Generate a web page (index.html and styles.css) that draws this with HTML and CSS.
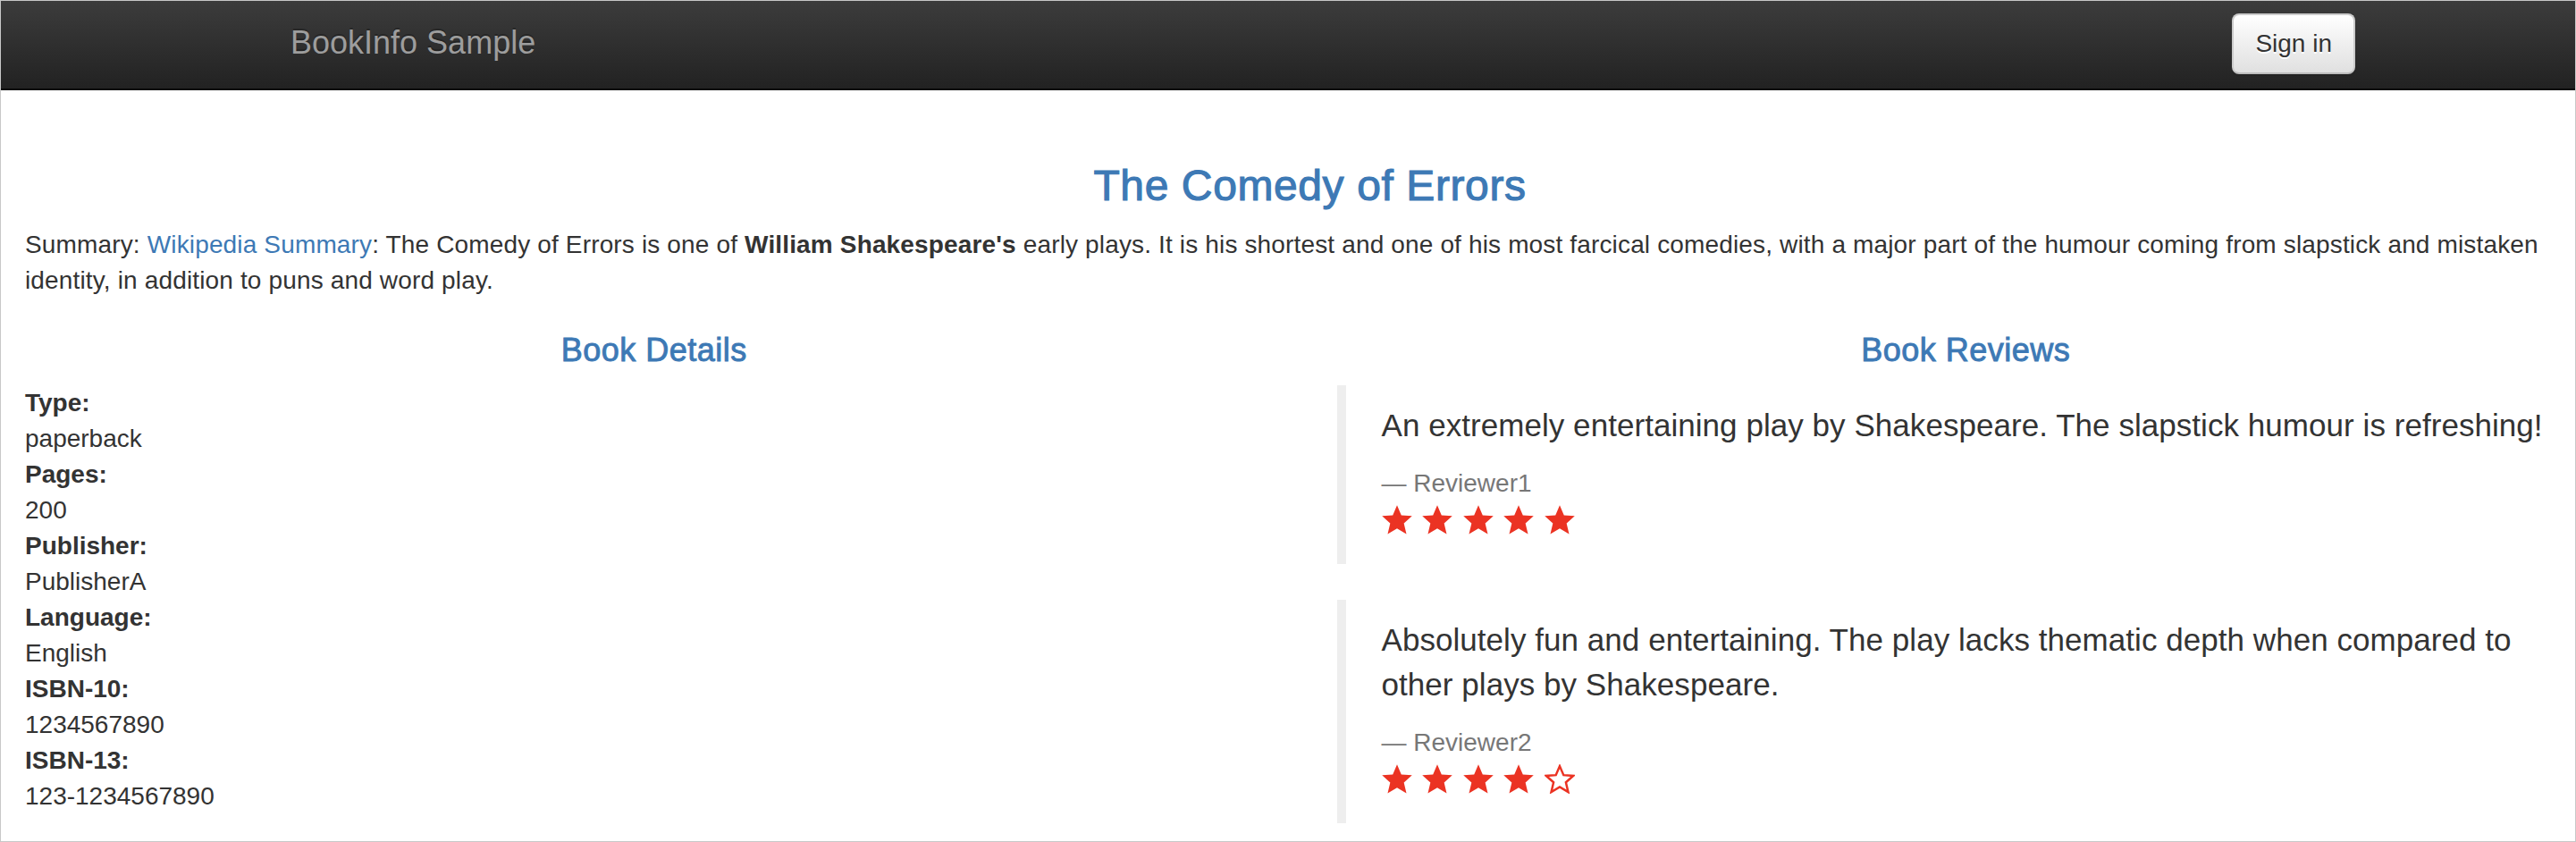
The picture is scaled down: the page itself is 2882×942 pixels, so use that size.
FILE: index.html
```html
<!DOCTYPE html>
<html lang="en">
<head>
<meta charset="utf-8">
<title>Simple Bookstore App</title>
<link rel="stylesheet" href="styles.css">
</head>
<body>
<svg class="defs" width="0" height="0" aria-hidden="true">
  <defs>
    <symbol id="star-full" viewBox="0 0 32 31">
      <polygon points="16,0.3 20.5,10.8 31.8,11.6 23.2,19.3 25.9,30.6 16,24.6 6.1,30.6 8.8,19.3 0.2,11.6 11.5,10.8" fill="currentColor"/>
    </symbol>
    <symbol id="star-empty" viewBox="0 0 32 31">
      <polygon points="16,0.3 20.5,10.8 31.8,11.6 23.2,19.3 25.9,30.6 16,24.6 6.1,30.6 8.8,19.3 0.2,11.6 11.5,10.8" fill="none" stroke="currentColor" stroke-width="2.6" stroke-linejoin="miter" transform="translate(16 17) scale(0.9) translate(-16 -17)"/>
    </symbol>
  </defs>
</svg>
<div class="frame">
  <div class="page">
    <nav class="navbar">
      <div class="nav-container">
        <a class="brand" href="#">BookInfo Sample</a>
        <button class="btn-signin" type="button">Sign in</button>
      </div>
    </nav>
    <main class="main">
      <h3 class="title">The Comedy of Errors</h3>
      <p class="summary">Summary: <a href="#">Wikipedia Summary</a>: The Comedy of Errors is one of <b>William Shakespeare's</b> early plays. It is his shortest and one of his most farcical comedies, with a major part of the humour coming from slapstick and mistaken identity, in addition to puns and word play.</p>
      <div class="row">
        <section class="col">
          <h4 class="section-title">Book Details</h4>
          <dl class="details">
            <dt>Type:</dt><dd>paperback</dd>
            <dt>Pages:</dt><dd>200</dd>
            <dt>Publisher:</dt><dd>PublisherA</dd>
            <dt>Language:</dt><dd>English</dd>
            <dt>ISBN-10:</dt><dd>1234567890</dd>
            <dt>ISBN-13:</dt><dd>123-1234567890</dd>
          </dl>
        </section>
        <section class="col">
          <h4 class="section-title">Book Reviews</h4>
          <blockquote class="review">
            <p>An extremely entertaining play by Shakespeare. The slapstick humour is refreshing!</p>
            <small class="reviewer">Reviewer1</small>
            <div class="stars">
              <svg><use href="#star-full"/></svg>
              <svg><use href="#star-full"/></svg>
              <svg><use href="#star-full"/></svg>
              <svg><use href="#star-full"/></svg>
              <svg><use href="#star-full"/></svg>
            </div>
          </blockquote>
          <blockquote class="review">
            <p>Absolutely fun and entertaining. The play lacks thematic depth when compared to other plays by Shakespeare.</p>
            <small class="reviewer">Reviewer2</small>
            <div class="stars">
              <svg><use href="#star-full"/></svg>
              <svg><use href="#star-full"/></svg>
              <svg><use href="#star-full"/></svg>
              <svg><use href="#star-full"/></svg>
              <svg><use href="#star-empty"/></svg>
            </div>
          </blockquote>
        </section>
      </div>
    </main>
  </div>
</div>
</body>
</html>
```
FILE: styles.css
```css
html, body {
  margin: 0;
  padding: 0;
  background: #fff;
}

body {
  overflow: hidden;
  font-family: "Liberation Sans", Arial, Helvetica, sans-serif;
  font-size: 28px;
  line-height: 40px;
  color: #333;
}

.defs {
  position: absolute;
  width: 0;
  height: 0;
  overflow: hidden;
}

.frame {
  width: 2882px;
  height: 942px;
  box-sizing: border-box;
  border: 1px solid #c8c8c8;
  overflow: hidden;
  background: #fff;
}

.page {
  width: 2932px;
}

/* Navbar */
.navbar {
  height: 98px;
  border-bottom: 2px solid #080808;
  background: linear-gradient(to bottom, #3c3c3c 0%, #222 100%);
}

.nav-container {
  width: 2340px;
  margin: 0 auto;
  display: flex;
  justify-content: space-between;
  align-items: flex-start;
}

.brand {
  padding: 27px 0 0 28px;
  font-size: 36px;
  line-height: 40px;
  color: #9d9d9d;
  text-decoration: none;
  text-shadow: 0 -2px 0 rgba(0, 0, 0, 0.25);
}

.btn-signin {
  margin: 14px 2px 0 0;
  padding: 12px 24px;
  font-family: "Liberation Sans", Arial, Helvetica, sans-serif;
  font-size: 28px;
  line-height: 40px;
  color: #333;
  background: linear-gradient(to bottom, #fff 0%, #e0e0e0 100%);
  border: 2px solid #ccc;
  border-bottom-color: #bdbdbd;
  border-radius: 8px;
  text-shadow: 0 2px 0 #fff;
  box-shadow: inset 0 2px 0 rgba(255, 255, 255, 0.15), 0 2px 2px rgba(0, 0, 0, 0.075);
  cursor: pointer;
}

/* Main */
.main {
  padding: 0 30px 0 27px;
}

.title {
  margin: 81px 0 19px;
  font-size: 48px;
  line-height: 52.8px;
  font-weight: normal;
  letter-spacing: 0.6px;
  -webkit-text-stroke: 1.1px currentColor;
  text-align: center;
  color: #3d79b5;
}

.summary {
  margin: 0 0 20px;
  letter-spacing: 0.15px;
}

.summary a {
  color: #3d79b5;
  text-decoration: none;
}

.row {
  display: grid;
  grid-template-columns: 1fr 1fr;
  column-gap: 60px;
}

.section-title {
  margin: 18px 0 20px;
  font-size: 36px;
  line-height: 39.6px;
  font-weight: normal;
  letter-spacing: 0.5px;
  -webkit-text-stroke: 0.9px currentColor;
  text-align: center;
  color: #3d79b5;
}

.details {
  margin: 0;
}

.details dt {
  font-weight: bold;
}

.details dd {
  margin: 0;
}

/* Reviews */
.review {
  margin: 0 0 40px;
  padding: 20px 40px;
  border-left: 10px solid #eee;
  font-size: 35px;
  line-height: 50px;
}

.review p {
  margin: 0 0 20px;
  letter-spacing: 0.05px;
}

.reviewer {
  display: block;
  font-size: 28px;
  line-height: 40px;
  color: #777;
}

.reviewer::before {
  content: "\2014\00A0";
}

.stars {
  display: flex;
  gap: 11.5px;
  height: 50px;
  padding-top: 4px;
  box-sizing: border-box;
  color: #eb3323;
}

.stars svg {
  width: 34px;
  height: 33px;
  display: block;
}
```
